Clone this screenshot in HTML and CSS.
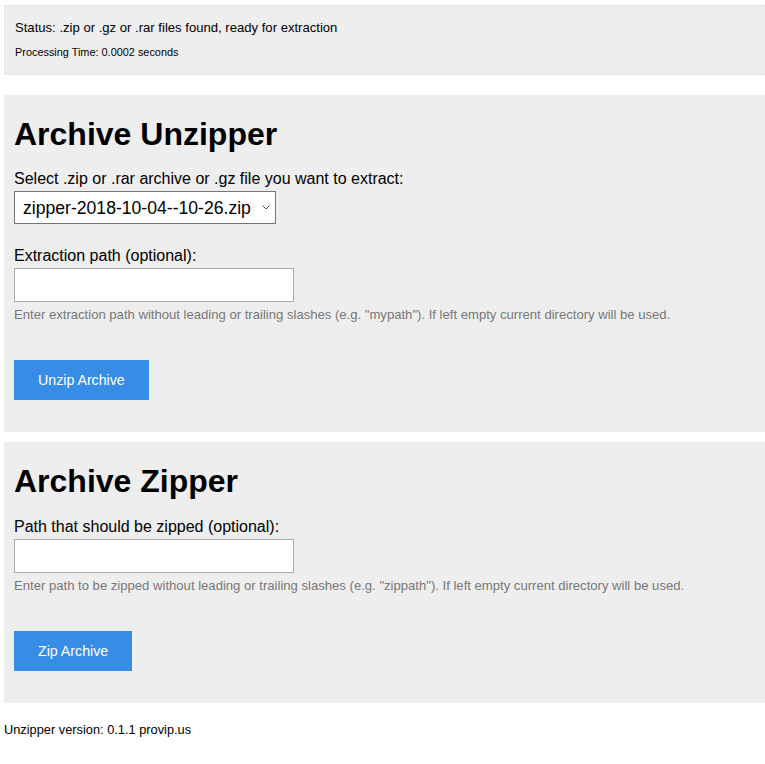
FILE: index.html
```html
<!DOCTYPE html>
<html lang="en">
<head>
<meta charset="utf-8">
<title>Unzipper</title>
<link rel="stylesheet" href="styles.css">
</head>
<body>
<div class="page">
  <p class="status">
    Status: .zip or .gz or .rar files found, ready for extraction<br>
    <span class="small">Processing Time: 0.0002 seconds</span>
  </p>
  <form action="" method="POST">
    <fieldset>
      <h1>Archive Unzipper</h1>
      <label for="zipfile">Select .zip or .rar archive or .gz file you want to extract:</label>
      <div class="select-wrap">
        <select id="zipfile" name="zipfile" size="1" class="select">
          <option value="zipper-2018-10-04--10-26.zip">zipper-2018-10-04--10-26.zip</option>
        </select>
        <svg class="chevron" width="8" height="5" viewBox="0 0 8 5" aria-hidden="true"><path d="M0.5 0.5 L4 4 L7.5 0.5" fill="none" stroke="#555" stroke-width="1"/></svg>
      </div>
      <label for="extpath">Extraction path (optional):</label>
      <input type="text" id="extpath" name="extpath" class="form-field">
      <p class="info">Enter extraction path without leading or trailing slashes (e.g. "mypath"). If left empty current directory will be used.</p>
      <input type="submit" name="dounzip" class="submit" value="Unzip Archive">
    </fieldset>
    <fieldset>
      <h1>Archive Zipper</h1>
      <label for="zippath">Path that should be zipped (optional):</label>
      <input type="text" id="zippath" name="zippath" class="form-field">
      <p class="info">Enter path to be zipped without leading or trailing slashes (e.g. "zippath"). If left empty current directory will be used.</p>
      <input type="submit" name="dozip" class="submit" value="Zip Archive">
    </fieldset>
  </form>
  <p class="version">Unzipper version: 0.1.1 provip.us</p>
</div>
</body>
</html>
```
FILE: styles.css
```css
html {
  overflow-x: hidden;
}
body {
  margin: 5px 0 0 4px;
  font-family: "Liberation Sans", Arial, sans-serif;
  font-size: 16px;
  line-height: 24px;
  color: #000;
  background: #fff;
}
.page {
  margin-right: -10px;
}
.status {
  margin: 0 0 20px;
  padding: 10px;
  font-size: 13.1px;
  background: #eee;
  border: 1px dotted #ddd;
}
.small {
  font-size: 10.9px;
}
fieldset {
  border: 0;
  background-color: #eee;
  margin: 10px 0;
  padding: 5.6px 10px 12px;
  min-width: 0;
}
h1 {
  font-size: 32px;
  line-height: 24px;
  margin: 21.44px 0;
  font-weight: bold;
}
label {
  display: block;
  margin-top: 20px;
}
.select-wrap {
  position: relative;
  width: 262px;
}
.select {
  display: block;
  appearance: none;
  -webkit-appearance: none;
  box-sizing: border-box;
  width: 262px;
  height: 33px;
  margin: 0;
  padding: 0 24px 0 8px;
  font-family: "Liberation Sans", Arial, sans-serif;
  font-size: 17.6px;
  color: #000;
  background: #fff;
  border: 1px solid #767676;
  border-radius: 0;
}
.chevron {
  position: absolute;
  right: 6px;
  top: 14px;
}
.form-field {
  display: block;
  box-sizing: border-box;
  width: 280px;
  height: 34px;
  margin: 0;
  padding: 8px;
  font-family: "Liberation Sans", Arial, sans-serif;
  font-size: 13.33px;
  border: 1px solid #aaa;
  background: #fff;
}
.info {
  margin: 1px 0 12.8px;
  font-size: 13.1px;
  color: #777;
}
.submit {
  display: block;
  box-sizing: border-box;
  height: 40px;
  margin: 32.8px 0 20px;
  padding: 0 24px;
  font-family: "Liberation Sans", Arial, sans-serif;
  font-size: 14.2px;
  color: #fff;
  background-color: #378de5;
  border: 0;
  border-radius: 0;
  cursor: pointer;
}
.submit:hover {
  background-color: #2c6db2;
}
.version {
  margin: 15px 0 0;
  font-size: 12.8px;
}
```
